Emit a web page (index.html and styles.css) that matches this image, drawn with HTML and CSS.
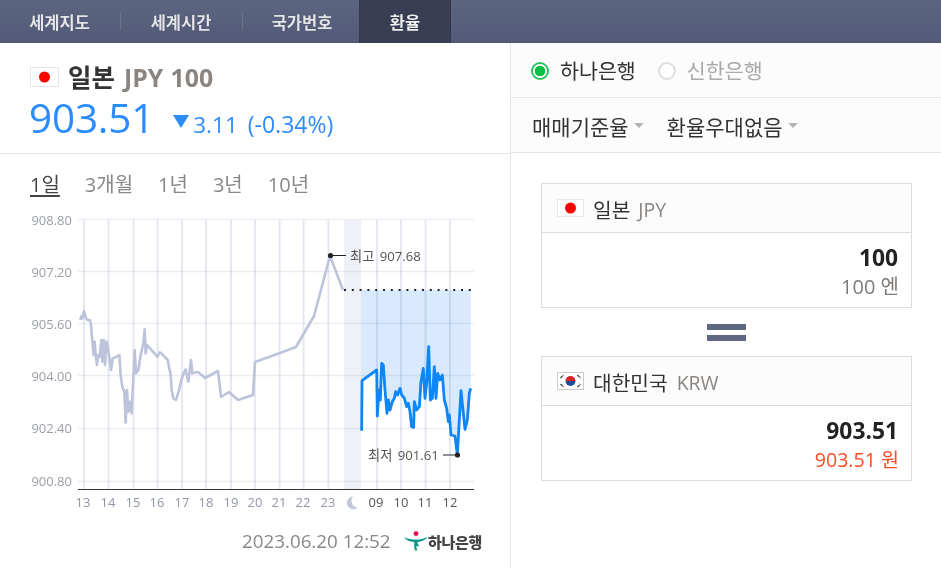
FILE: index.html
```html
<!DOCTYPE html>
<html lang="ko">
<head>
<meta charset="utf-8">
<title>환율</title>
<link rel="stylesheet" href="styles.css">
</head>
<body>
<nav class="tabs">
  <a class="tab tab-a">세계지도</a>
  <a class="tab tab-b">세계시간</a>
  <a class="tab tab-c">국가번호</a>
  <a class="tab tab-d active">환율</a>
</nav>
<main class="layout">
  <section class="left">
    <header class="quote">
      <div class="quote-title">
        <svg class="flag flag-lg" viewBox="0 0 29 20"><rect x=".5" y=".5" width="28" height="19" fill="#fff" stroke="#e6e6e6"/><circle cx="14.5" cy="10" r="5.500" fill="#f00"/></svg>
        <strong class="country">일본</strong>
        <span class="code">JPY 100</span>
      </div>
      <div class="quote-price">
        <span class="price">903.51</span>
        <span class="tri"></span>
        <span class="change">3.11</span>
        <span class="pct">(-0.34%)</span>
      </div>
    </header>
    <div class="ranges">
      <a class="range on">1일</a>
      <a class="range">3개월</a>
      <a class="range">1년</a>
      <a class="range">3년</a>
      <a class="range">10년</a>
    </div>
    <svg class="chart" viewBox="0 205 510 320" width="510" height="320">
      <rect class="night" x="344" y="220" width="17" height="269"/>
      <g transform="translate(355 340) scale(.33333)">
        <polygon class="area" points="18,-150 18,122 21,122 65,90 67,228 72,150 76,180 80,70 85,75 90,150 96,220 100,180 105,210 112,185 118,175 122,155 128,165 135,145 140,165 148,175 155,200 160,190 165,215 170,260 176,262 178,185 185,210 193,200 198,125 205,85 210,175 215,130 221,20 226,180 232,175 238,80 243,175 248,100 255,120 262,105 268,180 275,205 280,245 283,225 288,285 300,288 307,345 318,152 323,200 330,268 337,240 343,160 347,145 347,-150"/>
      </g>
      <g class="hgrid">
        <line x1="78" x2="474" y1="219.5" y2="219.5"/>
        <line x1="78" x2="474" y1="271.5" y2="271.5"/>
        <line x1="78" x2="474" y1="323.5" y2="323.5"/>
        <line x1="78" x2="474" y1="375.5" y2="375.5"/>
        <line x1="78" x2="474" y1="428.5" y2="428.5"/>
        <line x1="78" x2="474" y1="481.5" y2="481.5"/>
      </g>
      <g class="vgrid">
        <line x1="84" x2="84" y1="220" y2="489"/>
        <line x1="108.5" x2="108.5" y1="220" y2="489"/>
        <line x1="133.5" x2="133.5" y1="220" y2="489"/>
        <line x1="157.5" x2="157.5" y1="220" y2="489"/>
        <line x1="182" x2="182" y1="220" y2="489"/>
        <line x1="206" x2="206" y1="220" y2="489"/>
        <line x1="231" x2="231" y1="220" y2="489"/>
        <line x1="255" x2="255" y1="220" y2="489"/>
        <line x1="279.500" x2="279.500" y1="220" y2="489"/>
        <line x1="303.5" x2="303.5" y1="220" y2="489"/>
        <line x1="328.5" x2="328.5" y1="220" y2="489"/>
        <line x1="377" x2="377" y1="220" y2="489"/>
        <line x1="401" x2="401" y1="220" y2="489"/>
        <line x1="425.5" x2="425.5" y1="220" y2="489"/>
        <line x1="450" x2="450" y1="220" y2="489"/>
      </g>
      <line class="axis" x1="78" x2="474" y1="489.5" y2="489.5"/>
      <g class="ylabels">
        <text x="72" y="224.5">908.80</text>
        <text x="72" y="276.5">907.20</text>
        <text x="72" y="329">905.60</text>
        <text x="72" y="381">904.00</text>
        <text x="72" y="433">902.40</text>
        <text x="72" y="486">900.80</text>
      </g>
      <g class="xlabels">
        <text x="83" y="507">13</text>
        <text x="108" y="507">14</text>
        <text x="133" y="507">15</text>
        <text x="157" y="507">16</text>
        <text x="182" y="507">17</text>
        <text x="206" y="507">18</text>
        <text x="231" y="507">19</text>
        <text x="255" y="507">20</text>
        <text x="279" y="507">21</text>
        <text x="303" y="507">22</text>
        <text x="328" y="507">23</text>
      </g>
      <g class="xlabels dark">
        <text x="376" y="507">09</text>
        <text x="401" y="507">10</text>
        <text x="425" y="507">11</text>
        <text x="450" y="507">12</text>
      </g>
      <path class="moon" d="M353 496.5a6.4 6.400 0 1 0 4.800 11a6.800 6.800 0 0 1-4.800-11z"/>
      <g transform="translate(75 305) scale(.33333)">
        <polyline class="gray-line" points="16,45 18,35 22,40 27,18 33,40 38,45 45,45 48,60 52,110 56,150 59,110 62,150 66,180 70,150 74,155 79,105 82,170 86,105 90,180 95,110 100,135 108,195 113,160 125,155 133,150 137,210 142,245 148,260 152,352 156,255 160,320 165,290 170,325 174,240 179,135 183,205 190,195 197,150 205,115 209,72 212,145 216,120 225,130 247,155 254,142 262,148 278,165 287,210 290,255 295,280 303,285 312,255 322,215 332,193 340,230 348,165 352,205 354,204"/>
      </g>
      <polyline class="gray-line" points="193,373 198,372 205,378 218,371 221,397 229,392 238,400 253,395 255,362 280,353 296,347 314,316 330,256 343,290"/>
      <line class="dots" x1="344" x2="474" y1="290" y2="290"/>
      <g transform="translate(355 340) scale(.33333)">
        <polyline class="blue-line" points="20,272 21,122 65,90 67,228 72,150 76,180 80,70 85,75 90,150 96,220 100,180 105,210 112,185 118,175 122,155 128,165 135,145 140,165 148,175 155,200 160,190 165,215 170,260 176,262 178,185 185,210 193,200 198,125 205,85 210,175 215,130 221,20 226,180 232,175 238,80 243,175 248,100 255,120 262,105 268,180 275,205 280,245 283,225 288,285 300,288 307,345 318,152 323,200 330,268 337,240 343,160 347,145"/>
      </g>
      <line class="leader" x1="330" x2="346" y1="255.5" y2="255.5"/>
      <circle class="marker" cx="330.5" cy="255.5" r="2.6"/>
      <text class="note" x="350" y="261">최고 907.68</text>
      <line class="leader" x1="443" x2="457" y1="455" y2="455"/>
      <circle class="marker" cx="457.5" cy="455" r="2.6"/>
      <text class="note" x="368" y="460">최저 901.61</text>
    </svg>
    <footer class="stamp">
      <time class="time">2023.06.20 12:52</time>
      <span class="bank-logo">
        <svg class="bank-mark" viewBox="0 0 24 20" width="24" height="20">
          <circle cx="12" cy="2.600" r="2.400" fill="#e6004d"/>
          <path d="M0 6.200c4.500 1.800 8 2.400 12 2.400c4.200 0 8-.8 12-3.200c-2.600 3.800-7.500 5.400-12 5.600c-4.800.2-9.500-1.300-12-4.800z" fill="#0a9a8a"/>
          <path d="M10.200 10.600h3.600c-.6 1.600-.2 2.800 1.200 3.600l-.8 1.400l-1.800-.6c0 1.600.3 3 .9 4.600h-2.200c-.7-1.900-1-3.400-.9-5z" fill="#0a9a8a"/>
        </svg>
        <b class="bank-name">하나은행</b>
      </span>
    </footer>
  </section>
  <section class="right">
    <div class="options">
      <div class="radios">
        <span class="radio on"></span><span class="radio-label">하나은행</span>
        <span class="radio off"></span><span class="radio-label muted">신한은행</span>
      </div>
      <div class="selects">
        <span class="select">매매기준율<i class="caret"></i></span>
        <span class="select">환율우대없음<i class="caret"></i></span>
      </div>
    </div>
    <div class="converter">
      <article class="card">
        <div class="card-head">
          <svg class="flag" viewBox="0 0 27 18"><rect x=".5" y=".5" width="26" height="17" fill="#fff" stroke="#e8e8e8"/><circle cx="13.500" cy="9" r="5.500" fill="#f00"/></svg>
          <span class="card-country">일본</span><span class="card-code">JPY</span>
        </div>
        <div class="card-body">
          <div class="amount">100</div>
          <div class="unit">100 엔</div>
        </div>
      </article>
      <div class="equals"><span></span><span></span></div>
      <article class="card">
        <div class="card-head">
          <svg class="flag" viewBox="0 0 27 18"><rect x=".5" y=".5" width="26" height="17" fill="#fff" stroke="#ccc"/><path d="M8.500 9a5 5 0 0 1 10 0z" fill="#d8232a"/><path d="M8.500 9a5 5 0 0 0 10 0z" fill="#1d4f9c"/><g stroke="#444" stroke-width="1.400" stroke-dasharray="3 .6"><path d="M3.500 6l3-3"/><path d="M20.500 3l3 3"/><path d="M3.500 12l3 3"/><path d="M20.500 15l3-3"/></g></svg>
          <span class="card-country">대한민국</span><span class="card-code krw">KRW</span>
        </div>
        <div class="card-body">
          <div class="amount">903.51</div>
          <div class="unit red">903.51 원</div>
        </div>
      </article>
    </div>
  </section>
</main>
</body>
</html>
```

FILE: styles.css
```css
* { box-sizing: border-box; }
html, body { margin: 0; padding: 0; height: 100%; overflow: hidden; background: #fff; }
body { font-family: "Open Sans", "Noto Sans CJK KR", sans-serif; color: #333; width: 941px; height: 568px; }

.tabs { display: flex; height: 43px; background: linear-gradient(#5c6580, #525a78); }
.tab { display: flex; align-items: center; justify-content: center; color: #e4e6ea; font-weight: 700; font-size: 16.500px; height: 43px; text-shadow: 0 0 1px rgba(0,0,0,.4); position: relative; }
.tab-a { width: 121px; padding-right: 2px; }
.tab-b { width: 122px; padding-right: 2px; }
.tab-c { width: 116px; padding-right: 0; padding-left: 2px; }
.tab-d { width: 92px; }
.tab-a::after, .tab-b::after { content: ""; position: absolute; right: 0; top: 13px; height: 17px; width: 1px; background: #6b738d; }
.tab.active { background: #393e55; color: #eef0f2; border-left: 1px solid #34394e; border-right: 1px solid #34394e; }

.layout { display: flex; height: 525px; }
.left { width: 510px; flex: none; }
.right { flex: 1; border-left: 1px solid #e4e4e4; margin-left: 0; }

.quote { height: 111px; border-bottom: 1px solid #e6e6e6; padding: 19px 0 0 30px; }
.quote-title { display: flex; align-items: center; height: 28px; margin-top: 1px; }
.flag { display: block; flex: none; width: 27px; height: 18px; }
.flag-lg { width: 29px; height: 20px; }
.country { font-size: 25.500px; font-weight: 700; color: #333; margin-left: 9px; line-height: 28px; }
.code { font-size: 24.800px; font-weight: 700; color: #8a8580; margin-left: 9px; line-height: 28px; word-spacing: 1px; }
.quote-price { display: flex; align-items: baseline; height: 46px; margin-top: 5px; color: #2b8cff; }
.price { font-size: 40.500px; line-height: 44px; letter-spacing: -.2px; margin-left: -1px; }
.tri { width: 0; height: 0; border-left: 8px solid transparent; border-right: 8px solid transparent; border-top: 13px solid #2b8cff; margin-left: 19px; margin-right: 4px; transform: translateY(-5px); }
.change { font-size: 22.500px; line-height: 30px; }
.pct { font-size: 23px; line-height: 30px; margin-left: 10px; }

.ranges { display: flex; height: 51px; padding: 16px 0 0 30px; font-size: 20px; color: #888; }
.range { line-height: 30px; margin-right: 25px; }
.range.on { color: #444; text-decoration: underline; text-underline-offset: 3px; }

.chart { display: block; }
.night { fill: #eff1f7; }
.area { fill: #d9eafe; }
.hgrid line { stroke: #eceef3; stroke-width: 1.500; mix-blend-mode: multiply; }
.vgrid line { stroke: #e6e9f0; stroke-width: 2; mix-blend-mode: multiply; }
.axis { stroke: #333; stroke-width: 1; }
.ylabels text { font-size: 13px; fill: #9a9ea8; text-anchor: end; }
.xlabels text { font-size: 13px; fill: #8f95a6; text-anchor: middle; }
.xlabels.dark text { fill: #555; }
.moon { fill: #c2c7dc; }
.gray-line { fill: none; stroke: #bcc3da; stroke-width: 2.600; stroke-linejoin: round; vector-effect: non-scaling-stroke; }
.blue-line { fill: none; stroke: #0f86f5; stroke-width: 2.800; stroke-linejoin: round; vector-effect: non-scaling-stroke; }
.dots { stroke: #222; stroke-width: 2; stroke-dasharray: 2 5.800; }
.leader { stroke: #222; stroke-width: 1; }
.marker { fill: #222; }
.note { font-size: 13.200px; fill: #555; word-spacing: 2px; }

.stamp { display: flex; align-items: center; height: 32px; padding-left: 242px; margin-top: 0; }
.time { font-size: 18.800px; color: #888; width: 162px; white-space: nowrap; }
.bank-logo { display: flex; align-items: center; }
.bank-mark { display: block; flex: none; }
.bank-name { font-size: 15px; font-weight: 900; color: #444; letter-spacing: -.3px; }

.options { background: #fcfcfc; height: 110px; border-bottom: 1px solid #e4e4e4; }
.radios { display: flex; align-items: center; height: 55px; border-bottom: 1px solid #e6e6e6; padding: 1px 0 0 20px; font-size: 20.600px; }
.radio { width: 18px; height: 18px; border-radius: 50%; flex: none; margin-right: 11px; }
.radio.on { border: 2px solid #2fc463; background: radial-gradient(circle, #0abf45 0 5px, #fff 5.500px); }
.radio.off { border: 2px solid #ddd; background: #fff; margin-left: 22px; margin-right: 11px; }
.radio-label { color: #333; line-height: 30px; }
.radio-label.muted { color: #aaa; }
.selects { display: flex; align-items: center; height: 54px; padding: 1px 0 0 21px; font-size: 21px; color: #333; }
.select { display: flex; align-items: center; margin-right: 23px; }
.caret { width: 0; height: 0; border-left: 5px solid transparent; border-right: 5px solid transparent; border-top: 5px solid #b4b4b8; margin-left: 5px; }

.converter { padding: 30px 0 0 30px; }
.card { width: 371px; height: 125px; border: 1px solid #dcdcdc; }
.card-head { display: flex; align-items: center; height: 49px; background: #fcfcfc; border-bottom: 1px solid #dcdcdc; padding-left: 15px; }
.card-country { font-size: 20.300px; color: #333; margin-left: 9px; padding-top: 2px; }
.card-code { font-size: 19.500px; color: #8a8580; margin-left: 8px; padding-top: 2px; }
.card-code.krw { margin-left: 9px; }
.card-body { text-align: right; padding: 8px 13px 0 0; }
.amount { font-size: 22.800px; font-weight: 700; color: #222; line-height: 34px; }
.unit { font-size: 20px; color: #7f7a76; line-height: 24px; margin-right: -1px; }
.unit.red { color: #fb4c24; font-size: 19.600px; }
.equals { display: flex; flex-direction: column; align-items: center; gap: 5px; width: 371px; height: 48px; padding-top: 16px; }
.equals span { display: block; width: 39px; height: 6px; background: #5f6882; flex: none; }
```
